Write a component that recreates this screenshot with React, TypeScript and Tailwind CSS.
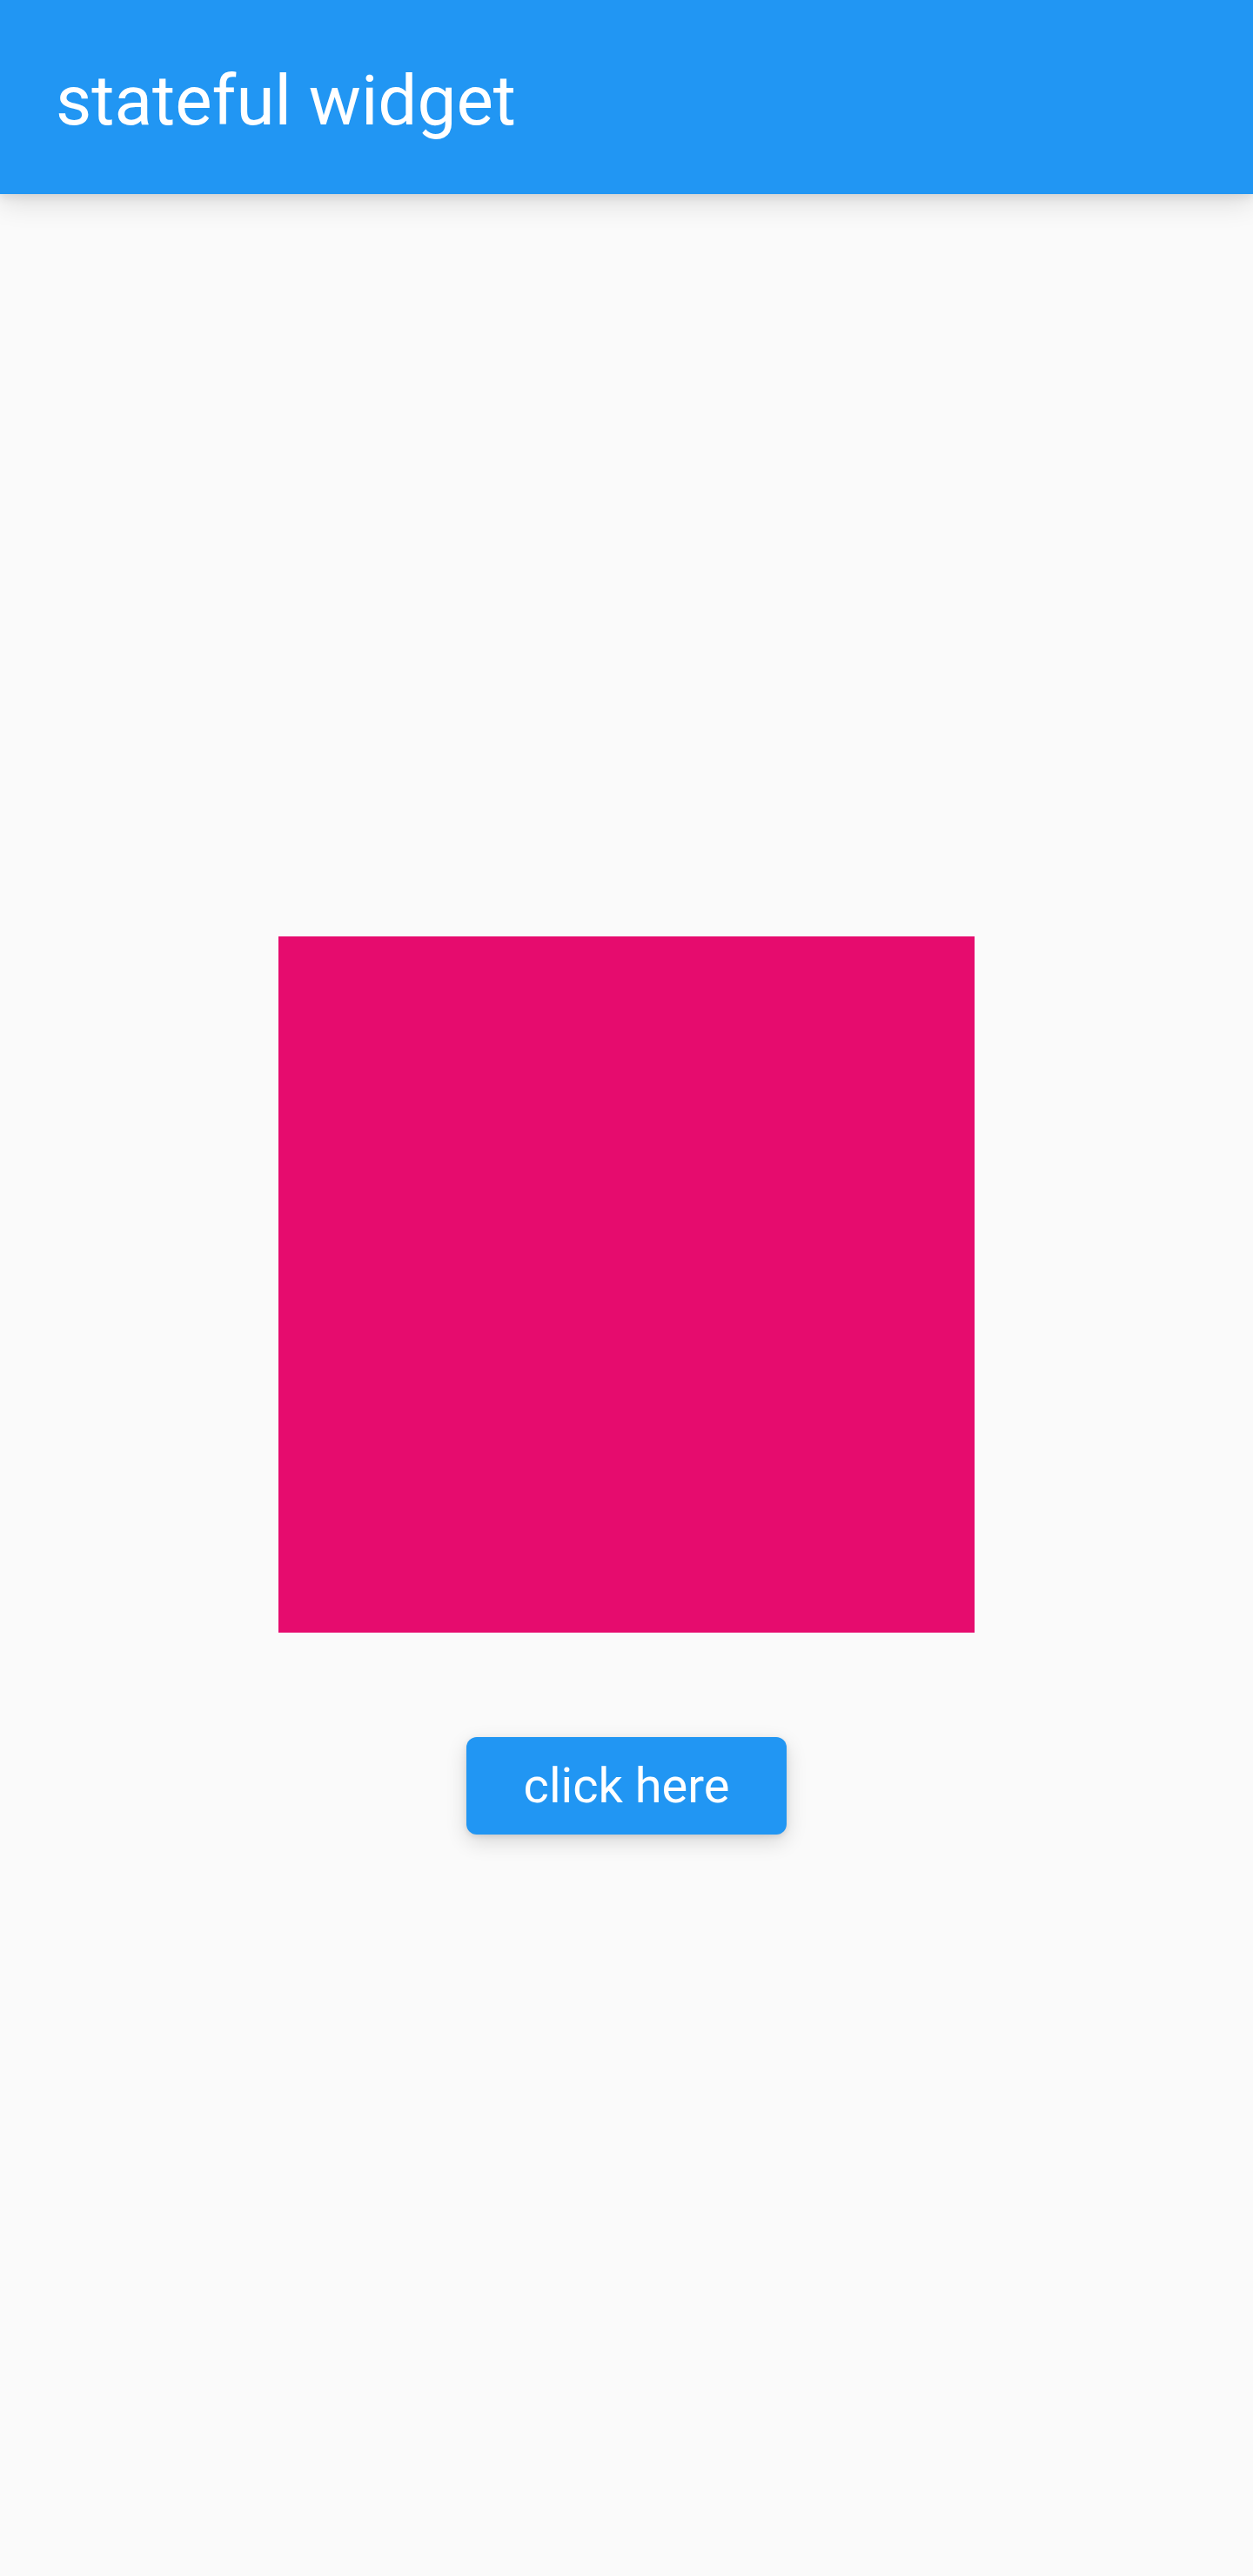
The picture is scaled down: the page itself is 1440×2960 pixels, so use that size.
import { useState } from 'react'

export default function App() {
  const [on, setOn] = useState(true)

  return (
    <div className="min-h-[2960px] flex flex-col bg-[#fafafa] font-['Roboto',sans-serif]">
      <header className="h-[223px] shrink-0 bg-[#2196f3] flex items-center px-[64px] pt-2 shadow-[0_10px_30px_rgba(0,0,0,0.12),0_4px_10px_rgba(0,0,0,0.08)] z-10">
        <h1 className="text-white text-[80px] leading-none font-normal">stateful widget</h1>
      </header>

      <main className="flex-1 flex flex-col items-center justify-center gap-[120px]">
        <div className={on ? 'w-[800px] h-[800px] bg-[#e60c6e]' : 'w-[800px] h-[800px] bg-[#2196f3]'} />
        <button
          onClick={() => setOn(!on)}
          className="w-[368px] h-[112px] rounded-[12px] bg-[#2196f3] text-white text-[56px] leading-none shadow-[0_8px_24px_rgba(0,0,0,0.14),0_2px_6px_rgba(0,0,0,0.1)]"
        >
          click here
        </button>
      </main>
    </div>
  )
}
